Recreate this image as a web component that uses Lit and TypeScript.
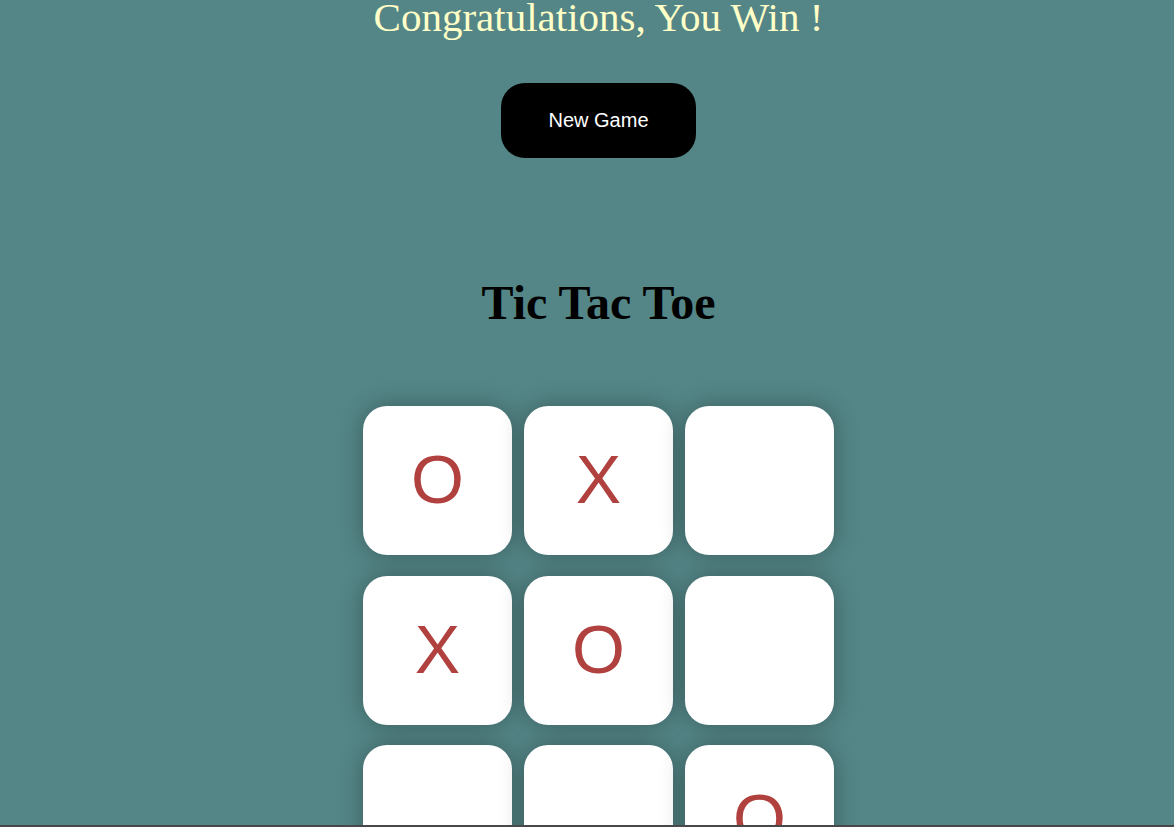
import { LitElement, html, css } from "lit";
import { customElement, state } from "lit/decorators.js";

@customElement("app-root")
export class AppRoot extends LitElement {
  static styles = css`
    :host {
      display: block;
    }
    .page {
      box-sizing: border-box;
      height: 100vh;
      overflow: hidden;
      padding-left: 23px;
      background: #548687;
      border-bottom: 2px solid #48484a;
      font-family: "Liberation Serif", "Times New Roman", serif;
      display: flex;
      flex-direction: column;
      align-items: center;
    }
    .page > * {
      flex-shrink: 0;
    }
    .message {
      margin: 0 0 49px;
      color: #ffffc7;
      font-size: 41px;
      line-height: 34px;
    }
    .new-game {
      padding: 24px 47px;
      border: 0;
      border-radius: 24px;
      background: #000;
      color: #fff;
      font-family: "Liberation Sans", Arial, sans-serif;
      font-size: 20px;
      line-height: 27px;
    }
    .title {
      margin: 117px 0 75px;
      color: #000;
      font-size: 48px;
      line-height: 56px;
      font-weight: bold;
    }
    .board {
      display: grid;
      grid-template-columns: repeat(3, 149px);
      grid-auto-rows: 149px;
      column-gap: 12px;
      align-content: space-between;
      height: 488px;
    }
    .cell {
      padding: 0 0 3px;
      border: 0;
      border-radius: 24px;
      background: #fff;
      box-shadow: 0 0 24px rgba(0, 0, 0, 0.3);
      color: #b0413e;
      font-family: "Liberation Sans", Arial, sans-serif;
      font-size: 68px;
    }
  `;

  @state() private cells = ["O", "X", "", "X", "O", "", "", "", "O"];

  private reset() {
    this.cells = this.cells.map(() => "");
  }

  render() {
    return html`
      <main class="page">
        <p class="message">Congratulations, You Win !</p>
        <button class="new-game" @click=${this.reset}>New Game</button>
        <h1 class="title">Tic Tac Toe</h1>
        <div class="board">
          ${this.cells.map(
            (mark, i) =>
              html`<button class="cell" aria-label=${`Square ${i + 1} ${mark}`}>${mark}</button>`
          )}
        </div>
      </main>
    `;
  }
}
